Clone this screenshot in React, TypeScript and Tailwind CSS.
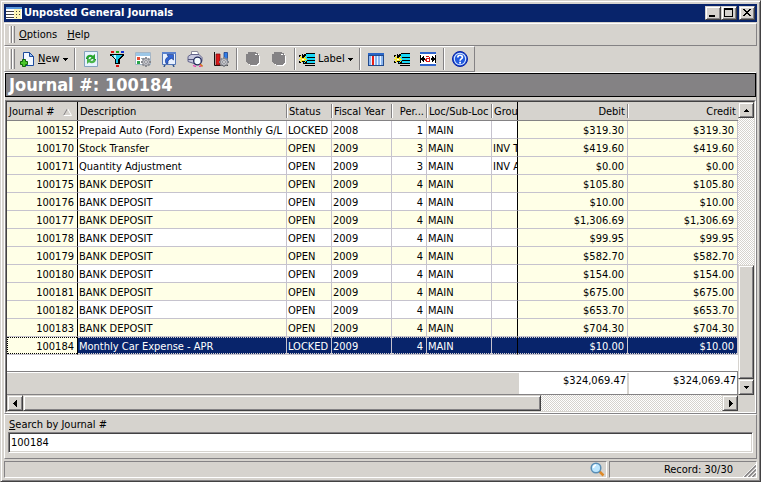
import type { ReactNode } from "react";

const raised =
  "border border-t-[#d6d3ce] border-l-[#d6d3ce] border-r-[#424142] border-b-[#424142] shadow-[inset_1px_1px_#fff,inset_-1px_-1px_#848284] bg-[#d6d3ce]";
const panel = "border border-t-white border-l-white border-r-[#848284] border-b-[#848284]";
const dither =
  "bg-[repeating-conic-gradient(#fff_0_25%,#d6d3ce_0_50%)] bg-[length:2px_2px]";

type Row = [string, string, string, string, string, string, string, string];

const rows: Row[] = [
  ["100152", "Prepaid Auto (Ford) Expense Monthly G/L", "LOCKED", "2008", "1", "MAIN", "", "$319.30"],
  ["100170", "Stock Transfer", "OPEN", "2009", "3", "MAIN", "INV T", "$419.60"],
  ["100171", "Quantity Adjustment", "OPEN", "2009", "3", "MAIN", "INV A", "$0.00"],
  ["100175", "BANK DEPOSIT", "OPEN", "2009", "4", "MAIN", "", "$105.80"],
  ["100176", "BANK DEPOSIT", "OPEN", "2009", "4", "MAIN", "", "$10.00"],
  ["100177", "BANK DEPOSIT", "OPEN", "2009", "4", "MAIN", "", "$1,306.69"],
  ["100178", "BANK DEPOSIT", "OPEN", "2009", "4", "MAIN", "", "$99.95"],
  ["100179", "BANK DEPOSIT", "OPEN", "2009", "4", "MAIN", "", "$582.70"],
  ["100180", "BANK DEPOSIT", "OPEN", "2009", "4", "MAIN", "", "$154.00"],
  ["100181", "BANK DEPOSIT", "OPEN", "2009", "4", "MAIN", "", "$675.00"],
  ["100182", "BANK DEPOSIT", "OPEN", "2009", "4", "MAIN", "", "$653.70"],
  ["100183", "BANK DEPOSIT", "OPEN", "2009", "4", "MAIN", "", "$704.30"],
  ["100184", "Monthly Car Expense - APR", "LOCKED", "2009", "4", "MAIN", "", "$10.00"],
];

function Icon({ children, smooth }: { children: ReactNode; smooth?: boolean }) {
  return (
    <svg
      className="size-4 shrink-0"
      viewBox="0 0 16 16"
      fill="none"
      shapeRendering={smooth ? "auto" : "crispEdges"}
      aria-hidden="true"
    >
      {children}
    </svg>
  );
}

function Gear() {
  return (
    <g>
      <path d="M11 6v10M6 11h10M7.500 7.500l7 7M14.500 7.500l-7 7" stroke="#84868c" strokeWidth="1.800" />
      <circle cx="11" cy="11" r="3.500" fill="#c6c7ce" stroke="#84868c" />
      <circle cx="11" cy="11" r="1.400" fill="#f7f7f7" stroke="#73757b" strokeWidth=".8" />
    </g>
  );
}

function NewIcon() {
  return (
    <Icon smooth>
      <path d="M4.500 1.500h6l4 4v9h-10z" fill="#f2f7ff" stroke="#1c4a9c" />
      <path d="M10.500 1.500v4h4z" fill="#9cc3f7" stroke="#1c4a9c" />
      <path d="M3.500 8.500h3v2h2v3h-2v2h-3v-2h-2v-3h2z" fill="#4ac72a" stroke="#10650c" />
    </Icon>
  );
}

function RefreshIcon() {
  return (
    <Icon smooth>
      <path d="M1.500.5h13v15h-13z" fill="#e7f3ff" stroke="#84a2bd" />
      <path d="M3 7.500C3 4 7.500 2.500 10 4.700L12 3v5H7l1.500-1.500C7 5.500 5.800 6.300 5.500 7.500z" fill="#29a631" />
      <path d="M13 8.500c0 3.500-4.500 5-7 2.800L4 13V8h5L7.500 9.500c1.500 1 2.700.2 3-1z" fill="#4ab54a" />
      <path d="M3 7.500h2.500M10.500 8.500H13" stroke="#108221" strokeWidth=".8" />
    </Icon>
  );
}

function FilterIcon() {
  return (
    <Icon>
      <path d="M2 0h3v2H2z" fill="#d61010" />
      <path d="M7 0h3v2H7z" fill="#18a618" />
      <path d="M12 0h3v2h-3z" fill="#1031d6" />
      <path d="M1 3h14v2h-1v1h-1v1h-1v1h-1v5H6V8H5V7H4V6H3V5H1z" fill="#000" />
      <path d="M3 4h10v1h-1v1h-1v1h-1v1H9v4H7V8H6V7H5V6H4V5H3z" fill="#18c3e7" />
      <path d="M5 4h2v4H6V7H5z" fill="#bdf7ff" />
      <path d="M7 14h3v2H7z" fill="#d61010" />
    </Icon>
  );
}

function FormIcon() {
  return (
    <Icon smooth>
      <path d="M.5 1.500h15v12H.5z" fill="#fff" stroke="#a5b6c6" />
      <path d="M1 2h14v3H1z" fill="#9cc7e7" />
      <path d="M2 6h3v3H2z" fill="#e74a31" />
      <path d="M2 10h3v3H2z" fill="#29a64a" />
      <path d="M6 7.500h6M6 11.500h3" stroke="#9caebd" />
      <Gear />
    </Icon>
  );
}

function ScreenIcon() {
  return (
    <Icon smooth>
      <path d="M4 13.500 3 16M12 13.500l1 2.500" stroke="#31558c" strokeWidth="1.500" />
      <path d="M1.500 1.500h13v12h-13z" fill="#e7f0ff" stroke="#5275b5" />
      <path d="M1 1h14v2H1z" fill="#5a82ce" />
      <path d="M5 12.500C3.500 9 5 6.500 7.500 6L6 3.500h6.500V9l-1.800-1.600C8 8 6.500 9.500 7 12.500z" fill="#3165d6" stroke="#10317b" strokeWidth=".6" />
    </Icon>
  );
}

function PrintPreviewIcon() {
  return (
    <Icon smooth>
      <path d="M4.500.5h6l2 5h-8z" fill="#fff" stroke="#8c8a9c" />
      <path d="M1 5.500 4 3.500h8l3 3v4l-5 3-9-3z" fill="#c6c7de" stroke="#63658c" />
      <path d="M1 8.500h6" stroke="#52557b" />
      <path d="m6 14.500 3 1M12 15.500h2" stroke="#ef31b5" strokeWidth="1.300" />
      <circle cx="10.500" cy="10" r="3.800" fill="#f2fbff" stroke="#21285a" strokeWidth="1.300" />
      <path d="m13 13 2.500 2.500" stroke="#d66b21" strokeWidth="1.600" />
    </Icon>
  );
}

function ChartIcon() {
  return (
    <Icon smooth>
      <path d="M1.500 1v13.500H15" stroke="#101010" />
      <path d="M3 3h4v11H3z" fill="#d61818" stroke="#7b0808" strokeWidth=".7" />
      <path d="M11 1.500h3.500V10H11z" fill="#317de7" stroke="#10317b" strokeWidth=".7" />
      <Gear />
    </Icon>
  );
}

function DisabledIcon() {
  return (
    <Icon>
      <path d="M4 2h9v1h1v2h1v8h-1v1h-1v1H6v-1H4v-1H3v-1H2V4h2z" fill="#fff" />
      <path d="M3 1h8v1h2v2h1v8h-1v1h-1v1H5v-1H3v-1H2v-1H1V3h2z" fill="#848284" />
      <path d="M10 3h2v1h-2z" fill="#fff" />
    </Icon>
  );
}

function TagIcon() {
  return (
    <Icon>
      <path d="M7 2h9v1H7zM5 3h2v1H5zM4 12h12v1H4zM6 14h10v1H6zM4 4h1v8H4z" fill="#000" />
      <path d="M7 3h9v9H5V4h2z" fill="#18d7f7" />
      <path d="M8 6h8v1H8zM8 9h8v1H8z" fill="#000" />
      <path d="M0 4h2v2H0zM5 4h2v2H5zM2 6h4v5H2zM0 10h2v2H0zM6 10h2v2H6zM3 3h1v3H3z" fill="#000" />
      <path d="M1 5h1v1h1v1h2V6h1V5h1v1H6v1h1v1h1v1H6v1h1v1H6v-1H3v1H1v-1h1V9H0V8h2V7H1z" fill="#f7e721" />
      <path d="M3 8h2v1H3z" fill="#fff" />
    </Icon>
  );
}

function ColumnsIcon() {
  return (
    <Icon>
      <path d="M0 2h16v13H0z" fill="#214a8c" />
      <path d="M0 2h16v2H0z" fill="#2965c6" />
      <path d="M1 5h14v9H1z" fill="#e7f3ff" />
      <path d="M1 5h2v9H1zM7 5h2v9H7zM10 5h2v9h-2zM13 5h2v9h-2z" fill="#8cb6ef" />
      <path d="M4 5h2v9H4z" fill="#e72018" />
    </Icon>
  );
}

function BestFitIcon() {
  return (
    <Icon>
      <path d="M0 3h16v10H0z" fill="#fff" />
      <path d="M0 1h16v2H0zM0 13h16v2H0z" fill="#3165ce" />
      <path d="M0 4h1v8H0zM15 4h1v8h-1zM1 7h4v2H1zM11 7h4v2h-4zM2 6h1v4H2zM3 5h1v6H3zM13 6h1v4h-1zM12 5h1v6h-1z" fill="#000" />
      <path d="M6 5h3v1H6zM9 6h1v5H9zM6 7h3v1H6zM5 8h2v2H5zM6 10h3v1H6z" fill="#d61818" />
    </Icon>
  );
}

function HelpIcon() {
  return (
    <Icon smooth>
      <circle cx="8" cy="8" r="7.500" fill="#1849ce" stroke="#0820a5" />
      <circle cx="8" cy="8" r="5.700" fill="#2159de" stroke="#d6e7ff" strokeWidth="1.100" />
      <path d="M5.800 6.500c0-3 4.600-2.900 4.600-.3C10.400 8 8.100 7.900 8.100 9.800" stroke="#fff" strokeWidth="1.700" />
      <path d="M7.200 10.800H9v1.700H7.200z" fill="#fff" />
    </Icon>
  );
}

function Down() {
  return (
    <svg className="h-[3px] w-[5px] shrink-0" viewBox="0 0 5 3" shapeRendering="crispEdges" aria-hidden="true">
      <path d="M0 0h5v1H4v1H3v1H2V2H1V1H0z" />
    </svg>
  );
}

function Grip() {
  return (
    <span className="flex shrink-0 self-stretch py-0.5">
      <span className="w-[3px] border-r border-l border-r-[#848284] border-l-white" />
      <span className="w-[3px] border-r border-l border-r-[#848284] border-l-white" />
    </span>
  );
}

function Sep() {
  return <span className="my-px mr-0.5 ml-0.5 w-0.5 shrink-0 self-stretch border-r border-r-white bg-[#848284]" />;
}

function ToolButton({ label, children, disabled }: { label: string; children: ReactNode; disabled?: boolean }) {
  return (
    <button type="button" aria-label={label} disabled={disabled} className="flex h-6 w-[26px] shrink-0 items-center justify-center">
      {children}
    </button>
  );
}

function ScrollButton({ label, path }: { label: string; path: string }) {
  return (
    <button type="button" aria-label={label} className={`flex size-4 shrink-0 items-center justify-center ${raised}`}>
      <svg className="size-[7px]" viewBox="0 0 7 7" shapeRendering="crispEdges" aria-hidden="true">
        <path d={path} />
      </svg>
    </button>
  );
}

function HeaderCell({ children, right, edge }: { children: ReactNode; right?: boolean; edge: string }) {
  return (
    <th className="h-[19px] border-b border-b-[#848284] p-0 font-normal">
      <div className={`h-[18px] ${edge === "black" ? "border-r border-r-black" : "py-0.5"}`}>
        <div
          className={`h-full overflow-hidden whitespace-nowrap px-0.5 ${
            edge === "black" ? "leading-[20px]" : edge === "none" ? "leading-[16px]" : "border-r border-r-[#848284] leading-[16px] shadow-[1px_0_#fff]"
          } ${right ? "text-right" : "text-left"}`}
        >
          {children}
        </div>
      </div>
    </th>
  );
}

function Cell({
  children,
  right,
  frozen,
  selected,
  odd,
  edge,
  first,
}: {
  children: ReactNode;
  right?: boolean;
  frozen?: boolean;
  selected: boolean;
  odd: boolean;
  edge?: boolean;
  first?: boolean;
}) {
  const highlighted = selected && !first;
  const tone = highlighted ? "bg-[#08246b] text-white" : frozen || odd ? "bg-[#ffffe7]" : "bg-white";
  const focus = selected ? `border-y border-dotted leading-[17px] ${first ? "border-l border-black" : "border-[#d6d3ce]"}` : "leading-[19px]";
  return (
    <td className={`h-[18px] border-r border-b border-b-[#c6c3ce] p-0 ${edge ? "border-r-black" : "border-r-[#c6c3ce]"} ${tone}`}>
      <div className={`h-[17px] overflow-hidden whitespace-nowrap pr-[3px] pl-px ${focus} ${right ? "text-right" : "text-left"}`}>
        {children}
      </div>
    </td>
  );
}

function JournalTable() {
  return (
    <table className="w-full table-fixed border-separate border-spacing-0">
      <colgroup>
        <col className="w-[71px]" />
        <col />
        <col className="w-[45px]" />
        <col className="w-[60px]" />
        <col className="w-[35px]" />
        <col className="w-[65px]" />
        <col className="w-[26px]" />
        <col className="w-[110px]" />
        <col className="w-[110px]" />
      </colgroup>
      <thead className="bg-[#d6d3ce]">
        <tr>
          <HeaderCell edge="black">
            <span className="flex items-center gap-2">
              Journal #
              <svg className="h-2 w-[9px]" viewBox="0 0 9 8" fill="none" aria-hidden="true">
                <path d="M4.500.5.5 7.500" stroke="#848284" />
                <path d="M4.500.5l4 7h-8" stroke="#fff" />
              </svg>
            </span>
          </HeaderCell>
          <HeaderCell edge="gray">Description</HeaderCell>
          <HeaderCell edge="gray">Status</HeaderCell>
          <HeaderCell edge="gray">Fiscal Year</HeaderCell>
          <HeaderCell edge="gray" right>Per...</HeaderCell>
          <HeaderCell edge="gray">Loc/Sub-Loc</HeaderCell>
          <HeaderCell edge="black">Grou</HeaderCell>
          <HeaderCell edge="gray" right>Debit</HeaderCell>
          <HeaderCell edge="none" right>Credit</HeaderCell>
        </tr>
      </thead>
      <tbody>
        {rows.map(([id, description, status, year, period, loc, group, amount], i) => {
          const state = { selected: id === "100184", odd: i % 2 === 1 };
          return (
            <tr key={id} aria-selected={state.selected}>
              <Cell {...state} right frozen first edge>{id}</Cell>
              <Cell {...state}>{description}</Cell>
              <Cell {...state}>{status}</Cell>
              <Cell {...state}>{year}</Cell>
              <Cell {...state} right>{period}</Cell>
              <Cell {...state}>{loc}</Cell>
              <Cell {...state} edge>{group}</Cell>
              <Cell {...state} right frozen>{amount}</Cell>
              <Cell {...state} right frozen>{amount}</Cell>
            </tr>
          );
        })}
      </tbody>
    </table>
  );
}

function TitleBar() {
  const button = `flex h-3.5 w-4 items-center justify-center ${raised}`;
  return (
    <header className="flex h-[18px] shrink-0 items-center bg-[#08246b] pr-0.5 pl-0.5 text-white">
      <svg className="mr-0.5 size-4" viewBox="0 0 16 16" shapeRendering="crispEdges" aria-hidden="true">
        <path d="M0 2h16v12H0z" fill="#fff" />
        <path d="M0 2h16v2H0z" fill="#5a9ade" />
        <path d="M0 6h8v1H0zM0 9h8v1H0zM0 12h8v1H0z" fill="#424142" />
        <path d="M8 4h7v10H8z" fill="#fff7b5" />
        <path d="M10 6h1v1h-1zM10 9h1v1h-1zM10 12h1v1h-1zM13 6h1v1h-1zM13 9h1v1h-1z" fill="#424142" />
      </svg>
      <h1 className="flex-1 truncate leading-[16px] font-bold">Unposted General Journals</h1>
      <div className="flex">
        <button type="button" aria-label="Minimize" className={button}>
          <svg className="h-2 w-2.5" viewBox="0 0 10 8" shapeRendering="crispEdges"><path d="M1 6h6v2H1z" /></svg>
        </button>
        <button type="button" aria-label="Maximize" className={button}>
          <svg className="h-2.5 w-2.5" viewBox="0 0 10 10" shapeRendering="crispEdges"><path d="M0 0h9v9H0zM1 2v6h7V2z" fillRule="evenodd" /></svg>
        </button>
        <button type="button" aria-label="Close" className={`ml-0.5 ${button}`}>
          <svg className="h-2 w-2.5" viewBox="0 0 10 8" shapeRendering="crispEdges">
            <path d="M1 0h2v1h1v1h2V1h1V0h2v1H8v1H7v1H6v1h1v1h1v1h1v1H7V6H6V5H4v1H3v1H1V6h1V5h1V4h1V3H3V2H2V1H1z" />
          </svg>
        </button>
      </div>
    </header>
  );
}

function Toolbar() {
  return (
    <div role="toolbar" aria-label="Journal tools" className={`flex h-[26px] items-stretch self-start pr-px pl-1 ${panel}`}>
      <Grip />
      <button type="button" className="ml-[3px] flex shrink-0 items-center px-px">
        <NewIcon />
        <span className="ml-[3px] w-[25px] text-left leading-[16px]"><u>N</u>ew</span>
        <Down />
        <span className="w-[3px]" />
      </button>
      <Sep />
      <ToolButton label="Refresh"><RefreshIcon /></ToolButton>
      <ToolButton label="Filter"><FilterIcon /></ToolButton>
      <ToolButton label="Form settings"><FormIcon /></ToolButton>
      <ToolButton label="Send to screen"><ScreenIcon /></ToolButton>
      <ToolButton label="Print preview"><PrintPreviewIcon /></ToolButton>
      <ToolButton label="Chart settings"><ChartIcon /></ToolButton>
      <Sep />
      <ToolButton label="Post" disabled><DisabledIcon /></ToolButton>
      <ToolButton label="Post all" disabled><DisabledIcon /></ToolButton>
      <Sep />
      <button type="button" className="flex shrink-0 items-center px-px">
        <TagIcon />
        <span className="ml-[3px] w-[30px] text-left leading-[16px]">Label</span>
        <Down />
        <span className="w-[3px]" />
      </button>
      <Sep />
      <ToolButton label="Columns"><ColumnsIcon /></ToolButton>
      <ToolButton label="Edit labels"><TagIcon /></ToolButton>
      <ToolButton label="Best fit"><BestFitIcon /></ToolButton>
      <Sep />
      <ToolButton label="Help"><HelpIcon /></ToolButton>
    </div>
  );
}

function StatusBar() {
  const box = "border border-t-[#848284] border-l-[#848284] border-r-white border-b-white";
  return (
    <footer className="mt-0.5 flex h-[17px] shrink-0 gap-0.5">
      <div className={`flex flex-1 items-center justify-end pr-px ${box}`}>
        <svg className="size-[15px]" viewBox="0 0 15 15" fill="none" aria-hidden="true">
          <path d="m9.500 9.500 4 4" stroke="#de8a29" strokeWidth="2.500" />
          <circle cx="6" cy="6" r="4.800" fill="#bde7ff" stroke="#5a8eb5" strokeWidth="1.500" />
          <path d="M3.500 6c0-2 1-2.800 2.500-3" stroke="#fff" strokeWidth="1.500" />
        </svg>
      </div>
      <div className={`flex w-[148px] items-center justify-end ${box}`}>
        <span className="mr-2.5 leading-[16px]">Record: 30/30</span>
        <svg className="size-[13px] self-end" viewBox="0 0 13 13" aria-hidden="true">
          <path d="M0 13 13 0M4 13l9-9M8 13l5-5" stroke="#fff" />
          <path d="M1.500 13 13 1.500M5.500 13 13 5.500M9.500 13 13 9.500" stroke="#848284" strokeWidth="1.500" />
        </svg>
      </div>
    </footer>
  );
}

export default function App() {
  return (
    <div className="flex h-screen flex-col border border-t-[#d6d3ce] border-r-[#424142] border-b-[#424142] border-l-[#d6d3ce] bg-[#d6d3ce] p-[3px] font-['DejaVu_Sans_Condensed','DejaVu_Sans',sans-serif] text-[11px] leading-[14px] text-black shadow-[inset_1px_1px_#fff,inset_-1px_-1px_#848284]">
      <TitleBar />
      <nav className={`mt-px flex h-[23px] shrink-0 items-center pl-1 ${panel}`}>
        <Grip />
        <button type="button" className="ml-1 leading-[16px]"><u>O</u>ptions</button>
        <button type="button" className="ml-2.5 leading-[16px]"><u>H</u>elp</button>
      </nav>
      <Toolbar />
      <main className={`flex min-h-0 flex-1 flex-col ${panel}`}>
        <h2 className="h-6 shrink-0 border border-black bg-[#848284] pl-[3px] text-[18px] leading-[22px] font-bold text-white">
          Journal #: 100184
        </h2>
        <section className="mt-[3px] flex min-h-0 flex-1 flex-col border border-t-[#848284] border-r-white border-b-white border-l-[#848284]">
          <div className="flex min-h-0 flex-1 flex-col border border-t-[#424142] border-r-[#d6d3ce] border-b-[#d6d3ce] border-l-[#424142]">
            <div className="flex min-h-0 flex-1">
              <div className="flex min-w-0 flex-1 flex-col">
                <div className="min-h-0 flex-1 overflow-hidden bg-white">
                  <JournalTable />
                </div>
                <div className="flex h-6 shrink-0 gap-0.5 border-y border-r border-[#848284] pt-px text-right leading-[16px] shadow-[inset_0_1px_#fff]">
                  <div className="flex-1" />
                  <div className="w-[108px] bg-white pr-px">$324,069.47</div>
                  <div className="w-[108px] bg-white pr-px">$324,069.47</div>
                </div>
              </div>
              <div className={`flex w-4 shrink-0 flex-col ${dither}`}>
                <ScrollButton label="Scroll up" path="M3 2h1v1h1v1h1v1H1V4h1V3h1z" />
                <div className="flex-[148]" />
                <div className={`flex-[113] ${raised}`} />
                <ScrollButton label="Scroll down" path="M1 2h5v1H5v1H4v1H3V4H2V3H1z" />
              </div>
            </div>
            <div className="flex h-4 shrink-0">
              <div className={`flex min-w-0 flex-1 ${dither}`}>
                <ScrollButton label="Scroll left" path="M5 0v7H4V6H3V5H2V4H1V3h1V2h1V1h1V0z" />
                <div className={`flex-[517] ${raised}`} />
                <div className="flex-[182]" />
                <ScrollButton label="Scroll right" path="M2 0v7h1V6h1V5h1V4h1V3H5V2H4V1H3V0z" />
              </div>
              <div className="w-4" />
            </div>
          </div>
        </section>
      </main>
      <div className={`flex h-[45px] shrink-0 flex-col px-[3px] pt-[3px] ${panel}`}>
        <label htmlFor="journal-search" className="pl-px"><u>S</u>earch by Journal #</label>
        <input
          id="journal-search"
          type="text"
          defaultValue="100184"
          className="h-[21px] w-full border border-t-[#848284] border-r-white border-b-white border-l-[#848284] bg-white px-0.5 shadow-[inset_1px_1px_#424142,inset_-1px_-1px_#d6d3ce] outline-none"
        />
      </div>
      <StatusBar />
    </div>
  );
}
